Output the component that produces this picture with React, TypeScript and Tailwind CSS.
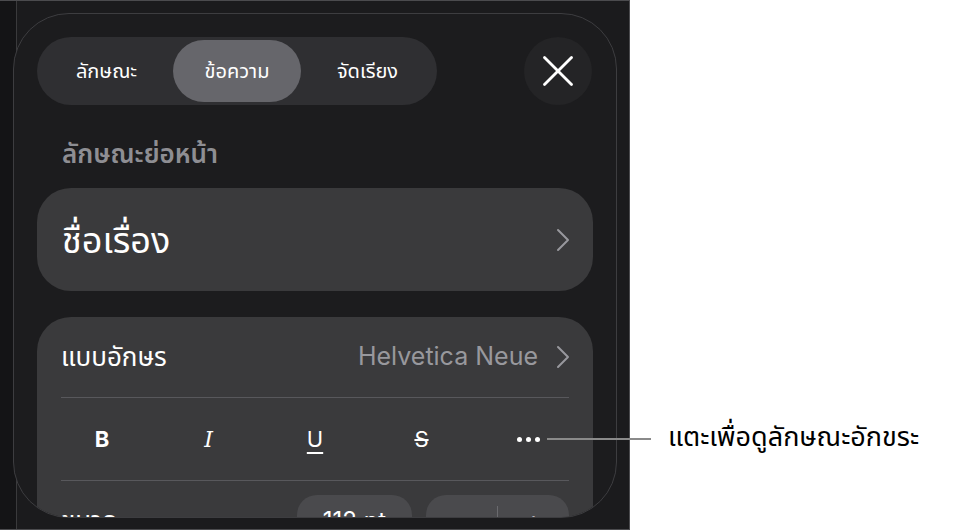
import { X } from "lucide-react";

const thai = "font-['Inter','Noto_Sans_Thai','Noto_Sans',sans-serif]";

const tabs = [
  { label: "ลักษณะ", active: false },
  { label: "ข้อความ", active: true },
  { label: "จัดเรียง", active: false },
];

// thin disclosure chevron used on navigation rows
const Chevron = () => (
  <svg width="14" height="24" viewBox="0 0 14 24" fill="none" className="shrink-0">
    <path d="M2 2 L12 12 L2 22" stroke="#98989d" strokeWidth="2" strokeLinecap="round" strokeLinejoin="round" />
  </svg>
);

function SegmentedTabs() {
  return (
    <div className="flex h-[68px] w-[400px] items-center rounded-full bg-[#2f2f32] px-[3px]">
      {tabs.map((tab) => (
        <div
          key={tab.label}
          className={`flex h-[62px] items-center justify-center rounded-full text-[20px] leading-[26px] text-white ${
            tab.active ? "w-[128px] bg-[#66666b]" : "flex-1"
          }`}
        >
          {tab.label}
        </div>
      ))}
    </div>
  );
}

function StyleButtons() {
  return (
    <div className="flex h-[82px] items-center justify-between px-[21px] text-[22px] text-white">
      <span className="w-[40px] text-center font-bold">B</span>
      <span className="w-[40px] text-center font-['DejaVu_Serif',serif] font-light italic">I</span>
      <span className="w-[40px] text-center underline underline-offset-[5px]">U</span>
      <span className="w-[40px] text-center line-through">S</span>
      <span className="flex w-[40px] items-center justify-center gap-[4px]">
        <span className="h-[5px] w-[5px] rounded-full bg-white" />
        <span className="h-[5px] w-[5px] rounded-full bg-white" />
        <span className="h-[5px] w-[5px] rounded-full bg-white" />
      </span>
    </div>
  );
}

function FontCard() {
  return (
    <div className="mt-[26px] rounded-[34px] bg-[#3a3a3c] px-[24px]">
      <div className="flex h-[80px] items-center justify-between">
        <span className="text-[26px] leading-[32px] text-white">แบบอักษร</span>
        <span className="-mr-px flex items-center gap-[18px] text-[25px] text-[#98989d]">
          Helvetica Neue
          <Chevron />
        </span>
      </div>
      <div className="h-px bg-[#58585c]" />
      <StyleButtons />
      <div className="h-px bg-[#58585c]" />
      <div className="flex h-[80px] items-center justify-between">
        <span className="text-[26px] leading-[32px] text-white">ขนาด</span>
        <div className="flex items-center gap-[14px]">
          <div className="flex h-[52px] w-[115px] items-center justify-center rounded-[20px] bg-[#4a4a4d] text-[24px] text-white">
            112 pt
          </div>
          <div className="flex h-[52px] w-[143px] items-center rounded-[20px] bg-[#4a4a4d] text-[28px] text-white">
            <span className="flex-1 text-center">−</span>
            <span className="h-[30px] w-px bg-[#6a6a6e]" />
            <span className="flex-1 text-center">+</span>
          </div>
        </div>
      </div>
    </div>
  );
}

export default function App() {
  return (
    <div className={`relative flex h-[531px] w-[980px] bg-white ${thai}`}>
      <div className="h-[530px] w-[630px] border-t border-r border-b border-[#4b4b4e] bg-[#141416]">
        <div className="ml-[16px] h-full border-l border-[#3a3a3c] bg-[#1b1b1d]">
          <div className="-ml-[4px] pt-[12px]">
            <div className="h-[505px] w-[604px] overflow-hidden rounded-[56px] border border-[#3d3d40] bg-[#1c1c1e] px-[23px] pt-[23px]">
              <div className="flex items-center justify-between">
                <SegmentedTabs />
                <button className="mr-[1px] flex h-[68px] w-[68px] items-center justify-center rounded-full bg-[#242426]">
                  <X size={54} strokeWidth={1.25} className="text-white" />
                </button>
              </div>

              <div className="mt-[34px] pl-[25px] text-[26px] font-semibold leading-[30px] text-[#8e8e93]">
                ลักษณะย่อหน้า
              </div>

              <div className="mt-[19px] flex h-[103px] items-center justify-between rounded-[34px] bg-[#3a3a3c] pl-[25px] pr-[23px]">
                <span className="text-[36px] leading-[44px] text-white">ชื่อเรื่อง</span>
                <Chevron />
              </div>

              <FontCard />
            </div>
          </div>
        </div>
      </div>

      {/* callout for the more-styles button */}
      <div className="absolute left-[547px] top-[438px] h-[2px] w-[104px] bg-[#8a8a8a]" />
      <div className="absolute left-[668px] top-[420px] text-[27px] leading-[34px] text-black">
        แตะเพื่อดูลักษณะอักขระ
      </div>
    </div>
  );
}
